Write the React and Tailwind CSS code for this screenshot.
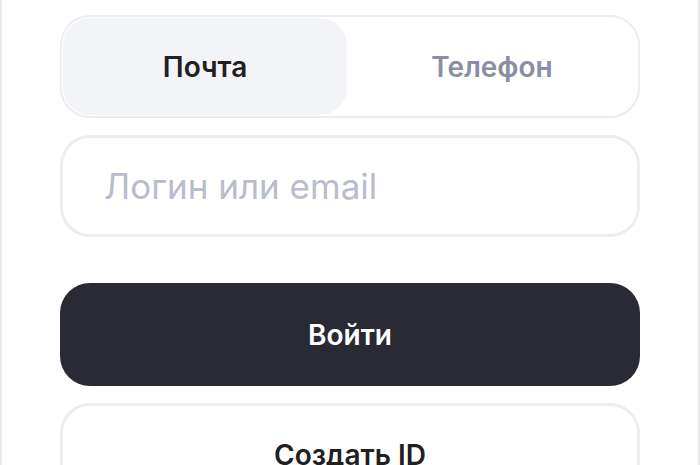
export default function App() {
  return (
    <div
      className="h-[465px] w-[700px] overflow-hidden border-x-2 border-[#e9e9ec] bg-white"
      style={{ fontFamily: "Inter, 'Noto Sans', sans-serif" }}
    >
      <div className="mx-[58px] flex flex-col pt-[15px]">
        {/* Tabs */}
        <div className="grid h-[103px] grid-cols-[284px_1fr] rounded-[30px] border-2 border-[#ecedf3] p-[1px]">
          <button className="rounded-[27px] bg-[#f3f4f8] pt-[1px] text-[28px] font-semibold text-[#21201f]">
            Почта
          </button>
          <button className="rounded-[27px] pt-[1px] text-[28px] font-semibold text-[#8b8da4]">
            Телефон
          </button>
        </div>

        {/* Login input */}
        <div className="mt-[17px] flex h-[102px] items-center rounded-[30px] border-[3px] border-[#ecedf3] px-[41px]">
          <input
            type="text"
            placeholder="Логин или email"
            className="w-full bg-transparent text-[35px] text-[#21201f] outline-none placeholder:text-[#b8bccd]"
          />
        </div>

        {/* Sign in */}
        <button className="mt-[46px] h-[103px] rounded-[30px] bg-[#2a2a34] text-[28px] font-semibold text-white">
          Войти
        </button>

        {/* Create ID */}
        <button className="mt-[17px] h-[103px] shrink-0 rounded-[30px] border-[3px] border-[#ecedf3] text-[28px] font-semibold text-[#21201f]">
          Создать ID
        </button>
      </div>
    </div>
  );
}
